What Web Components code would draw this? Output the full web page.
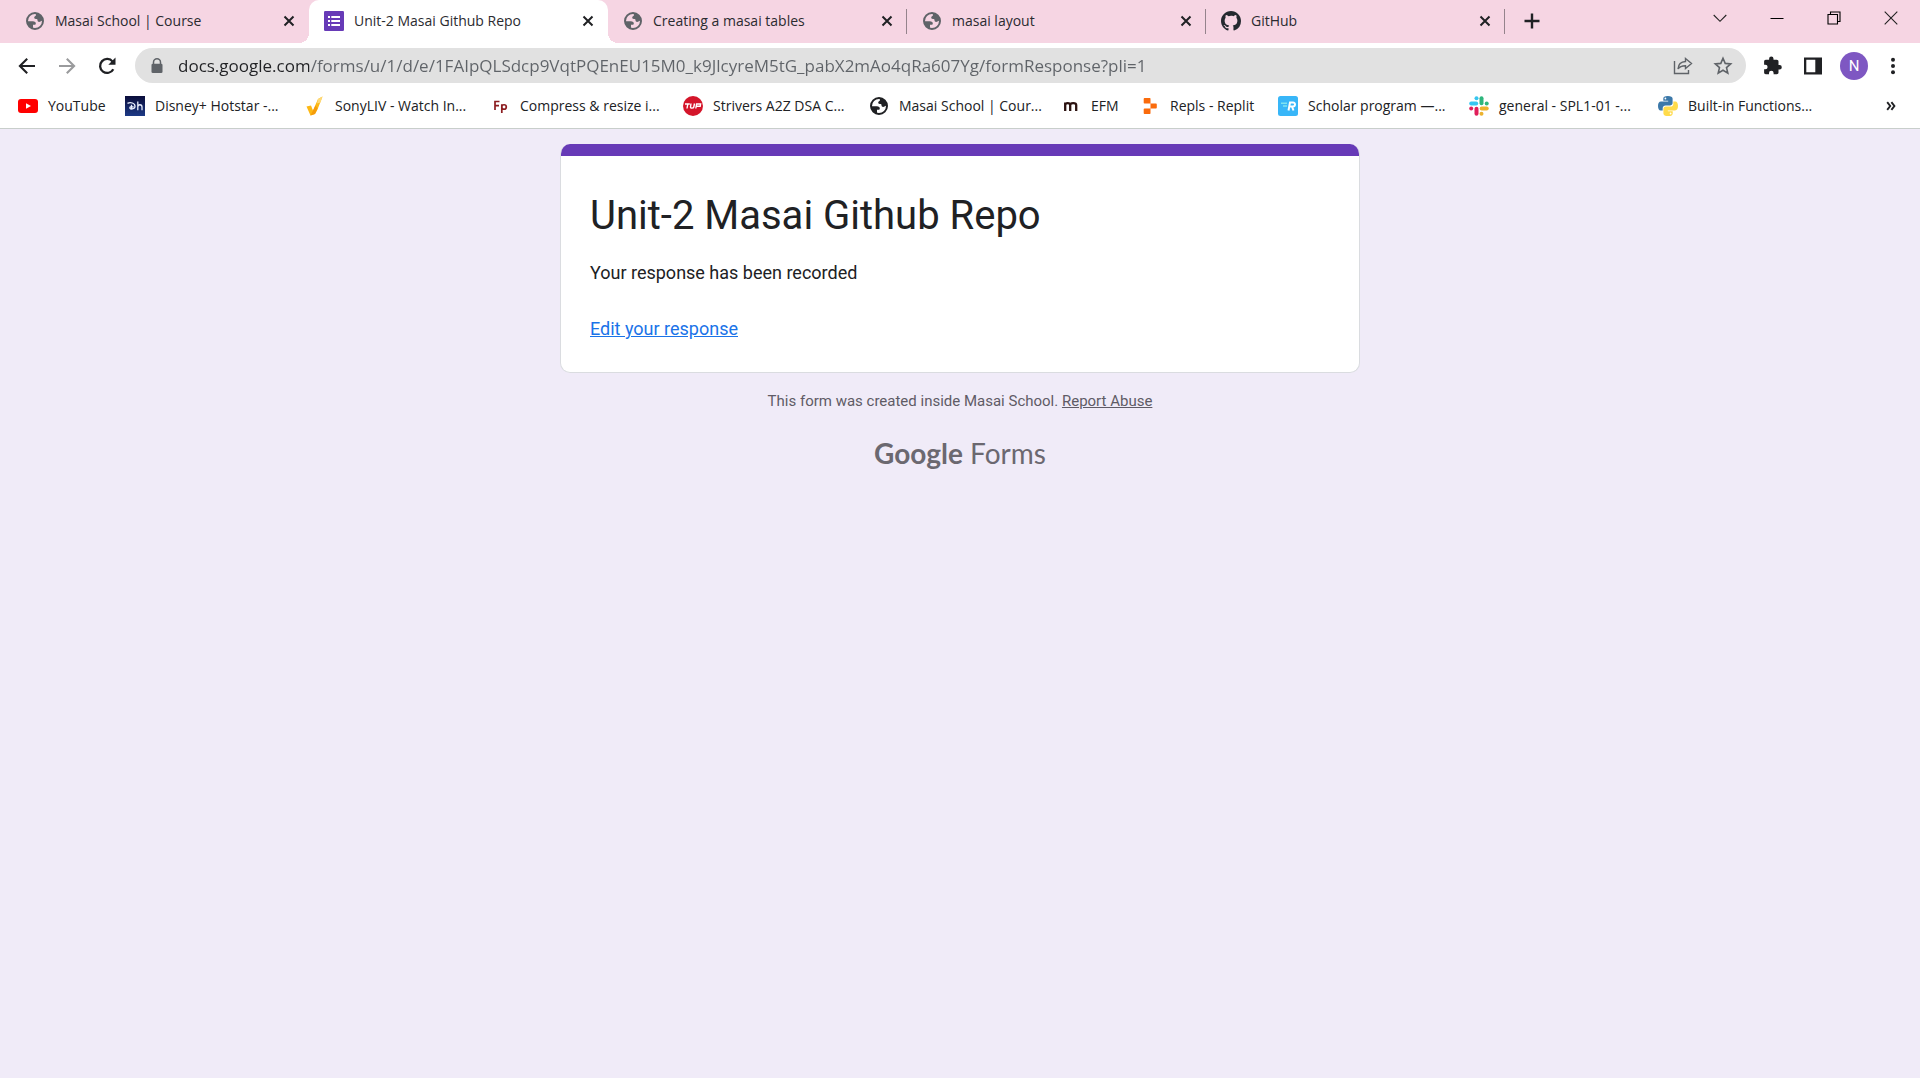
<!DOCTYPE html>
<html lang="en">
<head>
<meta charset="utf-8">
<title>Unit-2 Masai Github Repo</title>
<style>
html,body{margin:0;height:100%}
body{background:#f0ebf8;font-family:"Open Sans","Noto Sans",sans-serif;color:#202124}
</style>
</head>
<body>
<browser-window>
  <tab-strip slot="tabs">
    <browser-tab icon="globe">Masai School | Course</browser-tab>
    <browser-tab icon="forms" active>Unit-2 Masai Github Repo</browser-tab>
    <browser-tab icon="globe" divider>Creating a masai tables</browser-tab>
    <browser-tab icon="globe" divider>masai layout</browser-tab>
    <browser-tab icon="github" divider>GitHub</browser-tab>
  </tab-strip>
  <browser-toolbar slot="toolbar"></browser-toolbar>
  <bookmark-bar slot="bookmarks">
    <bookmark-link icon="youtube">YouTube</bookmark-link>
    <bookmark-link icon="hotstar">Disney+ Hotstar -...</bookmark-link>
    <bookmark-link icon="sony">SonyLIV - Watch In...</bookmark-link>
    <bookmark-link icon="fp">Compress &amp; resize i...</bookmark-link>
    <bookmark-link icon="tuf">Strivers A2Z DSA C...</bookmark-link>
    <bookmark-link icon="globe">Masai School | Cour...</bookmark-link>
    <bookmark-link icon="efm">EFM</bookmark-link>
    <bookmark-link icon="replit">Repls - Replit</bookmark-link>
    <bookmark-link icon="scholar">Scholar program —...</bookmark-link>
    <bookmark-link icon="slack">general - SPL1-01 -...</bookmark-link>
    <bookmark-link icon="python">Built-in Functions...</bookmark-link>
  </bookmark-bar>
  <form-page>
    <response-card>
      <span slot="title">Unit-2 Masai Github Repo</span>
      <span slot="message">Your response has been recorded</span>
      <span slot="action">Edit your response</span>
    </response-card>
    <form-footer></form-footer>
  </form-page>
</browser-window>
<script>
const svg = (size, box, body) => `<svg width="${size}" height="${size}" viewBox="0 0 ${box} ${box}" fill="currentColor" aria-hidden="true">${body}</svg>`;
const ICONS = {
  globe: svg(20, 20, '<circle cx="10" cy="10" r="8" fill="none" stroke="currentColor" stroke-width="2"/><path d="M10.5 2.2c3.600 0 7 3 7.300 7l-2.300 1.300c-1.500 1-3 .2-3-1.300 0-1-.5-1.200-1.500-1.200-1.600 0-2.300-.9-1.500-2.200.5-.8 1.500-.8 1.500-1.800zM2.300 10.200h5.500c2 0 3 1 3 2.200 0 1-.6 1.400-1.600 1.400H8v3.700C4.500 17 2.300 14 2.300 10.200z"/>'),
  forms: svg(20, 20, '<rect width="20" height="20" rx="1.300" fill="#673ab7"/><path fill="#fff" d="M4 5h2v2H4zm3.300 0H16v2H7.300zM4 9h2v2H4zm3.300 0H16v2H7.300zM4 13h2v2H4zm3.300 0H16v2H7.300z"/>'),
  github: svg(20, 16, '<path fill="#24292f" d="M8 0C3.580 0 0 3.580 0 8c0 3.540 2.290 6.530 5.470 7.590.4.070.55-.17.55-.38 0-.19-.010-.82-.010-1.490-2.010.37-2.530-.49-2.690-.94-.090-.23-.48-.94-.82-1.130-.28-.15-.68-.52-.010-.53.63-.010 1.080.58 1.230.82.72 1.210 1.870.87 2.330.66.070-.52.28-.87.51-1.070-1.780-.2-3.640-.89-3.640-3.950 0-.87.31-1.590.82-2.150-.080-.2-.36-1.020.080-2.120 0 0 .67-.21 2.200.82A7.600 7.600 0 0 1 8 3.860c.68 0 1.360.090 2 .27 1.530-1.040 2.200-.82 2.200-.82.44 1.100.16 1.920.080 2.120.51.56.82 1.270.82 2.150 0 3.070-1.870 3.750-3.650 3.950.29.25.54.73.54 1.480 0 1.070-.010 1.930-.010 2.200 0 .21.15.46.55.38A8.010 8.010 0 0 0 16 8c0-4.420-3.580-8-8-8z"/>'),
  youtube: svg(20, 20, '<rect y="3" width="20" height="14" rx="3" fill="#f00"/><path fill="#fff" d="m8 7.200 5 2.800-5 2.800z"/>'),
  hotstar: svg(20, 20, '<defs><linearGradient id="h" x2="0" y2="1"><stop stop-color="#0a0d3a"/><stop offset="1" stop-color="#1d3a86"/></linearGradient></defs><rect width="20" height="20" fill="url(#h)"/><path d="M2.500 7.300c3-1.500 7.500-.3 7.500 3 0 3-5.200 3.600-5.200 1.500 0-1.700 3.200-1.300 3.700-.9M6.500 8.800v4.500M12.800 5.500v8.700M12.800 11c0-3 4.200-3 4.200 0v3.200" fill="none" stroke="#e8eefc" stroke-width="1.300"/>'),
  sony: svg(20, 20, '<path d="M1.500 10.500 6 9.500l2 5L13 3l4.500-2.500-5 13L10 18l-4.500 1.500z" fill="#fdb813"/><path d="m13 3 4.500-2.500-2 6-3.500 1z" fill="#fdd978"/><path d="m8 14.500 2.500-5 2 3L10 18l-4.500 1.500z" fill="#f59c0b"/>'),
  fp: svg(20, 20, '<path d="M5 14V5.500h4.500M5 9.600h4M11.800 17V8.300M11.800 11c0-3 4.500-3 4.500 0s-4.500 3-4.500 0" fill="none" stroke="#8c1d20" stroke-width="1.700"/>'),
  tuf: svg(20, 20, '<circle cx="10" cy="10" r="10" fill="#d4152a"/><path d="M2 8h4.800M4.800 8l-.8 4.500M8 7.500 7.500 11c-.2 1.500 3 1.500 3.300 0L11.500 7.500M12.800 12.500l.8-4.500h4l-.4 2.300h-3.500" fill="none" stroke="#fff" stroke-width="1.400"/>'),
  efm: svg(20, 20, '<path d="M4.200 15V6.500M4.200 9c0-2.500 5-2.500 5 0v6M9.200 9c0-2.500 6-2.500 6 0v6" fill="none" stroke="#2b1210" stroke-width="2.300"/>'),
  replit: svg(20, 20, '<path fill="#fa6b0c" d="M4.500 2h5c.8 0 1 .4 1 1v4.500h-6c-.6 0-.8-.3-.8-.8V3c0-.6.3-1 .8-1zM10.500 7.500H16c.5 0 .8.4.8.9v3.200c0 .5-.3.900-.8.900h-5.500zM3.700 13.300c0-.5.3-.8.800-.8h6V17c0 .6-.2 1-1 1h-5c-.5 0-.8-.4-.8-1z"/>'),
  scholar: svg(20, 20, '<rect width="20" height="20" rx="2.500" fill="#38b6f8"/><path d="M3 7.200h6M5 10h4" stroke="#7fe3f0" stroke-width="1.500"/><path d="m10.500 14.500 1.500-8h3c2.800 0 2.500 4 0 4h-3.500m2.500 0 1.500 4" fill="none" stroke="#fff" stroke-width="2"/>'),
  slack: svg(20, 20, '<g stroke-width="4" stroke-linecap="round" fill="none"><path d="M2.200 7.500h5" stroke="#36c5f0"/><path d="M12.500 2.200v5" stroke="#2eb67d"/><path d="M12.700 12.600h5" stroke="#ecb22e"/><path d="M7.500 12.700v5" stroke="#e01e5a"/></g><circle cx="7.500" cy="2.200" r="2" fill="#36c5f0"/><circle cx="17.700" cy="7.500" r="2" fill="#2eb67d"/><circle cx="12.500" cy="17.800" r="2" fill="#ecb22e"/><circle cx="2.200" cy="12.600" r="2" fill="#e01e5a"/>'),
  python: svg(20, 20, '<path fill="#3b78a9" d="M9.900 0C6.500 0 5.300 1 5.300 2.600v2.200h4.900v.8H3C1 5.600 0 7.300 0 10s1 4.500 2.700 4.500h2v-2.400c0-1.500 1.300-2.700 2.800-2.700h4.800c1.300 0 2.300-1 2.300-2.300V2.600C14.600 1 12.800 0 9.900 0z"/><circle cx="7.400" cy="2.500" r=".9" fill="#fff"/><path fill="#ffdb4b" d="M10.100 20c3.400 0 4.600-1 4.600-2.600v-2.200H9.800v-.8H17c2 0 3-1.700 3-4.400s-1-4.500-2.700-4.500h-2v2.400c0 1.500-1.300 2.700-2.800 2.700H7.700c-1.300 0-2.300 1-2.300 2.300v4.500C5.400 19 7.200 20 10.100 20z"/><circle cx="12.600" cy="17.500" r=".9" fill="#fff"/>'),
  close: svg(12, 12, '<path d="m1.500 1.500 9 9m0-9-9 9" stroke="currentColor" stroke-width="2"/>'),
  plus: svg(16, 16, '<path d="M8 .5v15M.5 8h15" stroke="currentColor" stroke-width="2.400"/>'),
  chevron: svg(14, 14, '<path d="m.7 4 6.300 6.300L13.300 4" fill="none" stroke="#222" stroke-width="1.100"/>'),
  minimize: svg(14, 14, '<path d="M.5 7.500h13" stroke="#000"/>'),
  restore: svg(14, 14, '<path d="M1 3.500h9.500V13H1zM3.500 3.500V1H13v9.500h-2.500" fill="none" stroke="#000" stroke-width="1.100"/>'),
  exit: svg(14, 14, '<path d="m.7.7 12.600 12.600m0-12.600L.7 13.300" stroke="#222" stroke-width="1.100"/>'),
  back: svg(20, 20, '<path d="M18 10H3m7.200-7.300L2.900 10l7.300 7.300" fill="none" stroke="currentColor" stroke-width="2.100"/>'),
  forward: svg(20, 20, '<path d="M2 10h15M9.800 2.700l7.300 7.300-7.300 7.300" fill="none" stroke="#9a9b9d" stroke-width="2.100"/>'),
  reload: svg(20, 20, '<path d="M16.300 13.200a7 7 0 1 1-.7-7.600" fill="none" stroke="currentColor" stroke-width="2.300"/><path d="M18.500 1.500v7.200h-7.200z"/>'),
  lock: svg(16, 16, '<path d="M4.500 7V4.300a3.500 3.500 0 0 1 7 0V7" fill="none" stroke="#5f6368" stroke-width="1.500"/><rect x="2.500" y="5.700" width="11" height="9.300" rx="1.300" fill="#5f6368"/>'),
  share: svg(20, 20, '<path d="M1.500 5v12.500h14V14M12.500 2.500l6 5-6 5V9.700c-3.500 0-6 .8-7.500 3.300.3-4.500 3-7.300 7.500-7.500z" fill="none" stroke="#5f6368" stroke-width="1.400"/>'),
  star: svg(20, 20, '<path d="m10 2.300 2.200 5.100 5.500.5-4.200 3.700 1.300 5.500-4.800-2.900-4.800 2.900 1.300-5.500-4.200-3.700 5.500-.5z" fill="none" stroke="#5f6368" stroke-width="1.600"/>'),
  puzzle: svg(20, 20, '<path d="M16.600 9H15.500V5.500c0-1-.7-1.700-1.700-1.700h-3.300V2.800a2.200 2.200 0 0 0-4.400 0v1H2.800c-1 0-1.700.7-1.700 1.700v3.200h1.200a2.300 2.300 0 0 1 0 4.600H1.100v3.300c0 1 .7 1.700 1.700 1.700H6v-1.200a2.300 2.300 0 0 1 4.600 0v1.200h3.200c1 0 1.700-.7 1.700-1.700v-3.200h1.100a2.200 2.200 0 0 0 0-4.400z"/>'),
  panel: svg(20, 20, '<path fill-rule="evenodd" d="M1 1.500h18v17H1zM3.300 3.800v12.400h9V3.800z"/>'),
  dots: svg(20, 20, '<circle cx="10" cy="3.700" r="2"/><circle cx="10" cy="10" r="2"/><circle cx="10" cy="16.300" r="2"/>'),
  more: svg(10, 10, '<path d="m1.200 1.200 3 3.800-3 3.800M5.400 1.200l3 3.800-3 3.800" fill="none" stroke="currentColor" stroke-width="1.900"/>')
};
const RESET = `:host,*{box-sizing:border-box}svg{display:block;flex:none}button{border:0;background:none;padding:0;margin:0;color:inherit;font:inherit;display:grid;place-items:center;flex:none}a{color:inherit}`;
const define = (name, render) => customElements.define(name, class extends HTMLElement {
  connectedCallback() {
    if (!this.shadowRoot) this.attachShadow({mode: 'open'}).innerHTML = render(this);
  }
});
const button = (icon, label) => `<button type="button" aria-label="${label}">${ICONS[icon]}</button>`;

define('browser-window', () => `<style>:host{display:flex;flex-direction:column;min-height:100%}</style>
<slot name="tabs"></slot><slot name="toolbar"></slot><slot name="bookmarks"></slot><slot></slot>`);

define('tab-strip', () => `<style>${RESET}
:host{display:flex;height:43px;background:#f6d5e3;padding:0 1px 0 10px;font-size:14px}
nav{display:flex;flex:0 1 1495px;min-width:0}
.new{width:54px;height:42px}
.controls{display:flex;margin-left:auto;height:36px}
.controls button{width:57px}
</style><nav aria-label="Tabs"><slot></slot></nav><button class="new" type="button" aria-label="New tab">${ICONS.plus}</button>
<div class="controls">${button('chevron','Search tabs')}${button('minimize','Minimize')}${button('restore','Restore')}${button('exit','Close window')}</div>`);

define('browser-tab', el => `<style>${RESET}
:host{display:flex;flex:1 1 0;min-width:0;align-items:center;gap:10px;padding:0 9px 2px 15px;position:relative;color:#2b2b30}
:host([active]){background:#fff;border-radius:10px 10px 0 0}
:host([active])::before,:host([active])::after{content:"";position:absolute;bottom:0;width:10px;height:10px}
:host([active])::before{right:100%;background:radial-gradient(circle at 0 0,transparent 10px,#fff 10px)}
:host([active])::after{left:100%;background:radial-gradient(circle at 100% 0,transparent 10px,#fff 10px)}
:host([divider])::after{content:"";position:absolute;right:0;top:9px;width:1px;height:25px;background:#95838c}
:host([icon=globe]) svg{color:#5f6368}
.title{flex:1;min-width:0;white-space:nowrap;overflow:hidden;line-height:20px}
button{width:22px;height:22px}
:host button svg{color:#202124 !important}
</style>${ICONS[el.getAttribute('icon')]}<span class="title"><slot></slot></span>${button('close','Close tab')}`);

define('browser-toolbar', () => `<style>${RESET}
:host{display:flex;align-items:center;height:45px;background:#fff;padding:0 9px 0 7px}
button{width:40px;height:35px}
.address{flex:1;min-width:0;display:flex;align-items:center;height:35px;margin:0 7px 0 8px;padding:0 3px 0 14px;border-radius:18px;background:#e1e1e1}
.lock{width:16px;margin-right:13px}
input{flex:1;min-width:0;border:0;outline:0;padding:0;height:26px;font:17px/26px "Open Sans","Noto Sans",sans-serif;color:#5f6368;background:linear-gradient(90deg,#202124 131px,#5f6368 131px);-webkit-background-clip:text;background-clip:text;-webkit-text-fill-color:transparent}
.avatar span{display:grid;place-items:center;width:28px;height:28px;border-radius:50%;background:#7e57c2;color:#fff;font:15px/28px Roboto,sans-serif}
.avatar{width:42px}.menu{width:36px}
</style>${button('back','Back')}${button('forward','Forward')}${button('reload','Reload')}
<div class="address"><button class="lock" type="button" aria-label="Site information">${ICONS.lock}</button>
<input type="text" aria-label="Address" value="docs.google.com/forms/u/1/d/e/1FAIpQLSdcp9VqtPQEnEU15M0_k9JlcyreM5tG_pabX2mAo4qRa607Yg/formResponse?pli=1">
${button('share','Share')}${button('star','Bookmark')}</div>
${button('puzzle','Extensions')}${button('panel','Side panel')}<button class="avatar" type="button"><span>N</span></button><button class="menu" type="button" aria-label="Menu">${ICONS.dots}</button>`);

define('bookmark-bar', () => `<style>${RESET}
:host{display:flex;align-items:center;height:41px;background:#fff;border-bottom:1px solid #c8cecb;padding:0 18px 4px;font-size:14px}
nav{display:grid;grid-template-columns:107px 180px 185px 193px 186px 192px 79px 138px 191px 189px auto}
button{width:22px;height:22px;margin-left:auto}
</style><nav aria-label="Bookmarks"><slot></slot></nav>${button('more','More bookmarks')}`);

define('bookmark-link', el => `<style>${RESET}
:host{display:block;min-width:0}
a{display:flex;align-items:center;gap:10px;text-decoration:none;white-space:nowrap;line-height:20px;color:#202124}
</style><a href="#">${ICONS[el.getAttribute('icon')]}<span><slot></slot></span></a>`);

define('form-page', () => `<style>:host{display:block;width:100%;max-width:800px;margin:0 auto;padding-top:15px;font-family:Roboto,sans-serif}</style><slot></slot>`);

define('response-card', () => `<style>${RESET}
:host{display:block;background:#fff;border:1px solid #dadce0;border-top:0;border-radius:10px;overflow:hidden}
.bar{height:12px;background:#673ab7;margin:0 -1px}
.content{padding:35px 29px 30px}
h1{margin:0;font-size:40px;line-height:50px;font-weight:400}
p{margin:19px 0 0;font-size:18px;line-height:26px}
p+p{margin-top:30px}
a{color:#1a73e8}
</style><div class="bar"></div><div class="content"><h1><slot name="title"></slot></h1><p><slot name="message"></slot></p><p><a href="#"><slot name="action"></slot></a></p></div>`);

define('form-footer', () => `<style>${RESET}
:host{display:flex;flex-direction:column;align-items:center;padding-top:18px;color:#5f5b66}
p{margin:0;font-size:15px;line-height:20px}
.brand{display:flex;align-items:baseline;gap:7px;margin-top:22px;font:28px/40px Lato,sans-serif;color:#6b6870;text-decoration:none}
b{font-weight:700}
</style><p>This form was created inside Masai School. <a href="#">Report Abuse</a></p><a class="brand" href="#" aria-label="Google Forms"><b>Google</b><span>Forms</span></a>`);
</script>
</body>
</html>
